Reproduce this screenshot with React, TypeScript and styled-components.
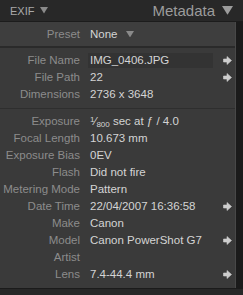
import React from 'react';
import styled, { createGlobalStyle } from 'styled-components';

const Global = createGlobalStyle`
  html, body { margin: 0; padding: 0; background: #262626; }
  body { font-family: "Liberation Sans", Arial, sans-serif; }
`;

const Frame = styled.div`
  width: 243px;
  height: 295px;
  background: #272727;
  overflow: hidden;
`;

const Header = styled.div`
  height: 22px;
  display: flex;
  align-items: center;
  justify-content: space-between;
  padding: 0 10px 0 10px;
  background: #282828;
  border-bottom: 1px solid #1c1c1c;
  box-sizing: border-box;
`;

const Mode = styled.div`
  display: flex;
  align-items: center;
  gap: 6px;
  color: #a8a8a8;
  font-size: 11px;
`;

const Title = styled.div`
  display: flex;
  align-items: center;
  gap: 7px;
  color: #9c9c9c;
  font-size: 15px;
`;

const Body = styled.div`
  display: flex;
  background: #1b1b1b;
  padding-bottom: 1px;
`;

const Panel = styled.div`
  width: 235px;
  background: #3a3a3a;
  border-right: 1px solid #484848;
  padding-bottom: 5px;
`;

const PresetBand = styled.div`
  height: 26px;
  display: grid;
  grid-template-columns: 80px 1fr;
  column-gap: 10px;
  align-items: center;
  background: #3e3e3e;
  border-bottom: 2px solid #2a2a2a;
  box-sizing: border-box;
  font-size: 11.5px;
`;

const Section = styled.div<{ $divider?: boolean }>`
  display: grid;
  grid-template-columns: 80px 1fr 12px;
  column-gap: 10px;
  grid-auto-rows: 17px;
  padding: ${(p) => (p.$divider ? '4px 0 5px' : '4px 0 0')};
  border-bottom: ${(p) => (p.$divider ? '1px solid #2e2e2e' : 'none')};
  font-size: 11.5px;
`;

const Label = styled.div`
  color: #8c8c8c;
  text-align: right;
  white-space: nowrap;
  line-height: 17px;
`;

const Value = styled.div<{ $field?: boolean }>`
  color: #d4d4d4;
  white-space: nowrap;
  line-height: 17px;
  margin-left: -2px;
  padding-left: 2px;
  background: ${(p) => (p.$field ? '#333333' : 'transparent')};
  height: 15px;
  align-self: center;
  display: flex;
  align-items: center;
`;

const PresetValue = styled.div`
  display: flex;
  align-items: center;
  gap: 8px;
  color: #d4d4d4;
`;

const ArrowCell = styled.div`
  display: flex;
  align-items: center;
  justify-content: flex-start;
`;

const Sup = styled.span`
  font-size: 8px;
  position: relative;
  top: -3px;
`;

const Sub = styled.span`
  font-size: 8px;
  position: relative;
  top: 2px;
`;

const Tri = ({ size, color }: { size: number; color: string }) => (
  <svg width={size} height={size * 0.8} viewBox="0 0 10 8">
    <path d="M0 0 L10 0 L5 8 Z" fill={color} />
  </svg>
);

const Arrow = () => (
  <svg width="9" height="9" viewBox="0 0 9 9">
    <path
      d="M0.5 3 L4 3 L4 0.5 L8.5 4.5 L4 8.5 L4 6 L0.5 6 Z"
      fill="#cdcdcd"
      stroke="#cdcdcd"
      strokeWidth="0.6"
      strokeLinejoin="round"
    />
  </svg>
);

type Row = { label: string; value?: React.ReactNode; arrow?: boolean; field?: boolean };

const fileRows: Row[] = [
  { label: 'File Name', value: 'IMG_0406.JPG', arrow: true, field: true },
  { label: 'File Path', value: '22', arrow: true },
  { label: 'Dimensions', value: '2736 x 3648' },
];

const exifRows: Row[] = [
  {
    label: 'Exposure',
    value: (
      <span>
        <Sup>1</Sup>⁄<Sub>800</Sub> sec at ƒ / 4.0
      </span>
    ),
  },
  { label: 'Focal Length', value: '10.673 mm' },
  { label: 'Exposure Bias', value: '0EV' },
  { label: 'Flash', value: 'Did not fire' },
  { label: 'Metering Mode', value: 'Pattern' },
  { label: 'Date Time', value: '22/04/2007 16:36:58', arrow: true },
  { label: 'Make', value: 'Canon' },
  { label: 'Model', value: 'Canon PowerShot G7', arrow: true },
  { label: 'Artist', value: '' },
  { label: 'Lens', value: '7.4-44.4 mm', arrow: true },
];

const renderRows = (rows: Row[]) =>
  rows.map((r) => (
    <React.Fragment key={r.label}>
      <Label>{r.label}</Label>
      <Value $field={r.field}>{r.value}</Value>
      <ArrowCell>{r.arrow && <Arrow />}</ArrowCell>
    </React.Fragment>
  ));

export default function App() {
  return (
    <Frame>
      <Global />
      <Header>
        <Mode>
          EXIF <Tri size={8} color="#8a8a8a" />
        </Mode>
        <Title>
          Metadata <Tri size={11} color="#9c9c9c" />
        </Title>
      </Header>
      <Body>
        <Panel>
          <PresetBand>
            <Label>Preset</Label>
            <PresetValue>
              None <Tri size={8} color="#8a8a8a" />
            </PresetValue>
          </PresetBand>
          <Section $divider>{renderRows(fileRows)}</Section>
          <Section>{renderRows(exifRows)}</Section>
        </Panel>
      </Body>
    </Frame>
  );
}
